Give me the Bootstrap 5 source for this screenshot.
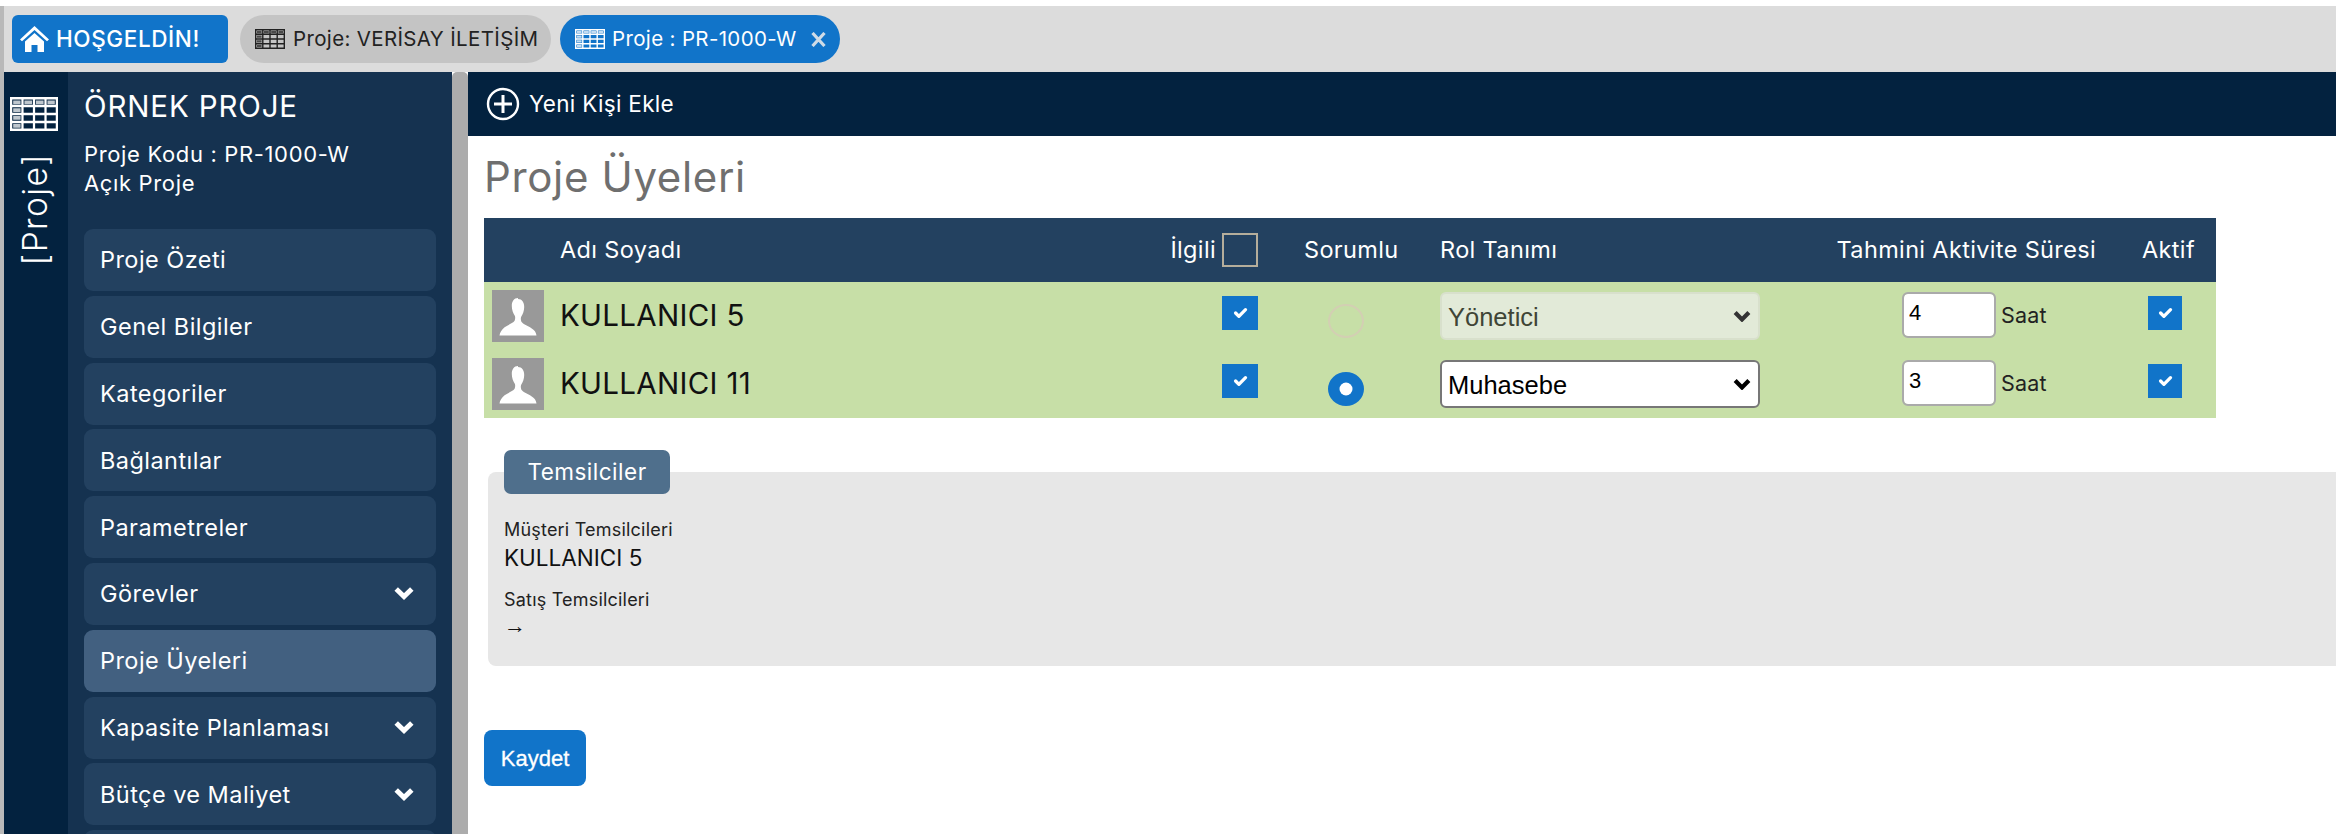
<!DOCTYPE html>
<html lang="tr">
<head>
<meta charset="utf-8">
<title>Proje Üyeleri</title>
<link rel="stylesheet" href="https://cdn.jsdelivr.net/npm/bootstrap@5.3.0/dist/css/bootstrap.min.css">
<style>
html,body{height:834px;overflow:hidden;background:#fff;}
body{font-family:Inter,"Noto Sans",sans-serif;padding-top:6px;color:#111;}
.shell{height:828px;border-left:4px solid #b9b9b9;display:flex;flex-direction:column;}
.topstrip{height:66px;background:#dcdcdc;padding:10px 8px;gap:12px;flex:none;}
.tab-home{width:216px;height:48px;background:#1174c9;color:#fff;border-radius:6px;font-size:22.5px;font-weight:500;padding-left:8px;gap:7px;letter-spacing:.6px;}
.tab-pill{height:48px;border-radius:24px;font-size:20.5px;gap:8px;padding-left:15px;letter-spacing:.35px;}
.tab-a{width:311px;background:#c4c4c4;color:#222;}
.tab-b{width:280px;background:#1174c9;color:#fff;margin-left:-3px;gap:7px;}
.tab-x{margin-left:7px;}
.workarea{flex:1;min-height:0;}
.iconcol{width:64px;background:#03223f;color:#fff;flex:none;padding-top:25px;padding-left:6px;}
.vtext{writing-mode:vertical-rl;transform:rotate(180deg);font-size:33.5px;font-weight:300;margin-top:22px;margin-left:5px;line-height:40px;letter-spacing:1.4px;}
.sidemenu{width:384px;background:#153250;color:#fff;padding:16px 16px 0;flex:none;overflow:hidden;}
.proj-name{font-size:29.5px;line-height:36px;margin-bottom:16px;font-weight:400;white-space:nowrap;letter-spacing:.85px;}
.proj-meta{font-size:22px;line-height:29px;margin-bottom:31px;letter-spacing:.65px;}
.menu-row{height:62px;margin-bottom:4.8px;border-radius:9px;background:#234160;padding:0 22px 0 16px;font-size:23.5px;letter-spacing:.45px;}
.menu-row.is-on{background:#426080;}
.dragbar{width:16px;background:#acacac;flex:none;border-radius:5px 5px 0 0;}
.mainpane{flex:1;min-width:0;}
.toolbar-top{height:64px;background:#03223f;color:#fff;padding-left:18px;gap:9px;font-size:22.5px;letter-spacing:.3px;}
.page-title{font-size:42px;font-weight:400;color:#6f6f6f;margin:0;padding:15px 0 0 16px;height:82px;line-height:52px;letter-spacing:.65px;}
.member-wrap{width:1732px;margin-left:16px;}
table.member-table{table-layout:fixed;margin:0;width:1732px;--bs-table-bg:transparent;border-collapse:collapse;}
.member-table th,.member-table td{padding:0;border:0;vertical-align:top;white-space:nowrap;}
.member-table thead tr{background:#234160;color:#fff;height:64px;}
.member-table th{font-weight:400;font-size:23.5px;vertical-align:middle;letter-spacing:.35px;}
.member-table tbody tr{background:#c7dfa7;height:68px;}
.member-table td{color:#111;}
.avatar-pic{display:block;width:52px;height:52px;margin:8px 0 0 8px;}
.person-name{font-size:29.5px;line-height:67px;font-weight:400;letter-spacing:.3px;}
.boxy.form-check-input{width:36px;height:34px;margin:0;border-radius:0;border:0;background-color:#1174c9;background-size:22px;opacity:1;float:none;}
.boxy-empty.form-check-input{width:36px;height:34px;margin:0 0 0 6px;border-radius:0;border:2px solid #b5ad9b;background-color:transparent;float:none;vertical-align:middle;flex:none;}
.rounder.form-check-input{width:36px;height:34px;margin:0;border:2px solid #d3cfb3;background-color:transparent;float:none;opacity:1;}
.rounder.form-check-input:checked{border-color:#1174c9;background-color:#1174c9;background-size:26px;}
.role-pick.form-select{width:320px;height:48px;font-family:"Liberation Sans",sans-serif;font-size:25.5px;padding:2px 6px 0;border:2px solid #777;border-radius:6px;color:#000;background-color:#fff;
background-image:url("data:image/svg+xml,%3csvg xmlns='http://www.w3.org/2000/svg' viewBox='0 0 20 14'%3e%3cpath fill='none' stroke='%23000' stroke-width='5' d='M2 3l8 8 8-8'/%3e%3c/svg%3e");background-position:right 7px center;background-size:18px 12px;}
.role-pick.form-select:disabled{background-color:#e2ead8;border-color:#d8e0cc;color:#3f4536;opacity:1;
background-image:url("data:image/svg+xml,%3csvg xmlns='http://www.w3.org/2000/svg' viewBox='0 0 20 14'%3e%3cpath fill='none' stroke='%23333' stroke-width='5' d='M2 3l8 8 8-8'/%3e%3c/svg%3e");}
.hours-in.form-control{width:94px;height:46px;font-family:"Liberation Sans",sans-serif;font-size:22px;padding:0 5px 4px;border:2px solid #aaa;border-radius:6px;color:#000;}
.hours-lbl{font-size:21.5px;color:#222;margin-left:5px;letter-spacing:.2px;}
.rep-panel{display:flow-root;margin:54px 0 0 20px;background:#e7e7e7;border-radius:8px 0 0 8px;height:194px;padding:0 16px;}
.rep-legend{width:166px;height:44px;background:#4f6f8c;color:#fff;border-radius:7px;font-size:22.5px;margin:-22px 0 0;letter-spacing:.5px;}
.rep-label{font-size:18px;line-height:24px;color:#222;letter-spacing:.2px;}
.rep-value{font-size:22.500px;line-height:32px;color:#111;}
.rep-arrow{font-family:"Liberation Sans",sans-serif;font-size:22px;line-height:28px;color:#111;}
.btn.save-btn{width:102px;height:56px;background:#1174c9;border:0;border-radius:8px;color:#fff;font-family:"Liberation Sans",sans-serif;font-size:22px;padding:0;margin:64px 0 0 16px;-webkit-text-stroke:.3px #fff;}
</style>
</head>
<body>
<svg width="0" height="0" class="d-block" aria-hidden="true">
  <defs>
    <symbol id="grid-ic" viewBox="0 0 30 20">
      <path fill="none" stroke="currentColor" stroke-width="1.4" d="M.7.7h28.6v18.6H.7zM.7 5.3h28.6M.7 10h28.6M.7 14.7h28.6M7.8.7v18.6M15 .7v18.6M22.2.7v18.6"/>
      <path fill="currentColor" opacity=".75" d="M2 2h4.600v2.200H2zM9 2h4.800v2.200H9zM16.200 2h4.800v2.200h-4.800zM23.400 2h4.600v2.200h-4.600zM2 6.600h4.600v2.200H2zM2 11.200h4.600v2.200H2zM2 15.900h4.600v2.200H2z"/>
    </symbol>
    <symbol id="chev-ic" viewBox="0 0 20 13">
      <path fill="none" stroke="#fff" stroke-width="5" d="M2.200 2l7.800 7.500L17.800 2"/>
    </symbol>
    <symbol id="user-ic" viewBox="0 0 52 52">
      <rect width="52" height="52" fill="#999"/>
      <path fill="#fff" d="M26 8c-4 0-6.200 3.400-6.200 8 0 4 1.400 7.300 3 9.800.6 1 .5 3.700-.2 5-1.500 2.300-6.600 4-10 6.500C9.500 40 8 42.500 7.500 45.500h37c-.5-3-2-5.500-5.100-7.200-3.400-2.500-8.500-4.200-10-6.500-.7-1.300-.8-4-.2-5 1.600-2.500 3-5.800 3-9.800 0-4.600-2.200-8-6.200-8z"/>
    </symbol>
  </defs>
</svg>
<div class="shell">
  <div class="topstrip d-flex align-items-center">
    <div class="tab-home d-flex align-items-center">
      <svg width="29" height="26" viewBox="0 0 29 26"><path fill="#fff" d="M14.500 0L0 13.500l2 1.800L14.500 4 27 15.300l2-1.800zM5 15.500V26h6.500v-7h6v7H24V15.500L14.500 7z"/></svg>
      <span>HOŞGELDİN!</span>
    </div>
    <div class="tab-pill tab-a d-flex align-items-center">
      <svg width="30" height="20"><use href="#grid-ic"/></svg><span>Proje: VERİSAY İLETİŞİM</span>
    </div>
    <div class="tab-pill tab-b d-flex align-items-center">
      <svg width="30" height="20"><use href="#grid-ic"/></svg><span>Proje : PR-1000-W</span>
      <svg class="tab-x" width="15" height="15" viewBox="0 0 15 15" aria-label="Kapat"><path stroke="#cfdbe6" stroke-width="3.200" d="M1.500 1l12 13M13.500 1l-12 13"/></svg>
    </div>
  </div>
  <div class="workarea d-flex">
    <div class="iconcol d-flex flex-column">
      <svg width="48" height="34" viewBox="0 0 30 20" preserveAspectRatio="none"><use href="#grid-ic"/></svg>
      <div class="vtext">[Proje]</div>
    </div>
    <nav class="sidemenu">
      <div class="proj-name">ÖRNEK PROJE</div>
      <div class="proj-meta">Proje Kodu : PR-1000-W<br>Açık Proje</div>
      <div class="menu-row d-flex align-items-center">Proje Özeti</div>
      <div class="menu-row d-flex align-items-center">Genel Bilgiler</div>
      <div class="menu-row d-flex align-items-center">Kategoriler</div>
      <div class="menu-row d-flex align-items-center">Bağlantılar</div>
      <div class="menu-row d-flex align-items-center">Parametreler</div>
      <div class="menu-row d-flex align-items-center justify-content-between">Görevler<svg width="20" height="13"><use href="#chev-ic"/></svg></div>
      <div class="menu-row is-on d-flex align-items-center">Proje Üyeleri</div>
      <div class="menu-row d-flex align-items-center justify-content-between">Kapasite Planlaması<svg width="20" height="13"><use href="#chev-ic"/></svg></div>
      <div class="menu-row d-flex align-items-center justify-content-between">Bütçe ve Maliyet<svg width="20" height="13"><use href="#chev-ic"/></svg></div>
      <div class="menu-row"></div>
    </nav>
    <div class="dragbar"></div>
    <main class="mainpane">
      <div class="toolbar-top d-flex align-items-center">
        <svg width="34" height="34" viewBox="0 0 34 34"><circle cx="17" cy="17" r="15" fill="none" stroke="#fff" stroke-width="2.400"/><path stroke="#fff" stroke-width="3" d="M17 8v18M8 17h18"/></svg>
        <span>Yeni Kişi Ekle</span>
      </div>
      <h1 class="page-title">Proje Üyeleri</h1>
      <div class="member-wrap">
        <table class="table member-table">
          <colgroup><col style="width:76px"><col style="width:604px"><col style="width:98px"><col style="width:178px"><col style="width:340px"><col style="width:340px"><col style="width:96px"></colgroup>
          <thead>
            <tr>
              <th></th><th>Adı Soyadı</th>
              <th class="pe-1"><span class="d-flex align-items-center justify-content-end">İlgili<input class="form-check-input boxy-empty" type="checkbox" aria-label="İlgili"></span></th>
              <th><span class="d-block" style="margin-left:42px">Sorumlu</span></th><th>Rol Tanımı</th>
              <th class="text-end pe-4">Tahmini Aktivite Süresi</th><th><span class="d-block" style="margin-left:22px">Aktif</span></th>
            </tr>
          </thead>
          <tbody>
            <tr>
              <td><svg class="avatar-pic"><use href="#user-ic"/></svg></td>
              <td class="person-name">KULLANICI 5</td>
              <td class="text-end pe-1"><input class="form-check-input boxy" type="checkbox" checked aria-label="İlgili" style="margin-top:14px"></td>
              <td><input class="form-check-input rounder" type="radio" name="res" disabled aria-label="Sorumlu" style="margin:22px 0 0 66px"></td>
              <td><select class="form-select role-pick" disabled style="margin-top:10px" aria-label="Rol"><option>Yönetici</option></select></td>
              <td><div class="d-flex align-items-center" style="margin:10px 0 0 122px"><input class="form-control hours-in" value="4" aria-label="Saat"><span class="hours-lbl">Saat</span></div></td>
              <td><input class="form-check-input boxy" type="checkbox" checked aria-label="Aktif" style="margin:14px 0 0 28px;width:34px"></td>
            </tr>
            <tr>
              <td><svg class="avatar-pic"><use href="#user-ic"/></svg></td>
              <td class="person-name">KULLANICI 11</td>
              <td class="text-end pe-1"><input class="form-check-input boxy" type="checkbox" checked aria-label="İlgili" style="margin-top:14px"></td>
              <td><input class="form-check-input rounder" type="radio" name="res2" checked aria-label="Sorumlu" style="margin:22px 0 0 66px"></td>
              <td><select class="form-select role-pick" style="margin-top:10px" aria-label="Rol"><option>Muhasebe</option></select></td>
              <td><div class="d-flex align-items-center" style="margin:10px 0 0 122px"><input class="form-control hours-in" value="3" aria-label="Saat"><span class="hours-lbl">Saat</span></div></td>
              <td><input class="form-check-input boxy" type="checkbox" checked aria-label="Aktif" style="margin:14px 0 0 28px;width:34px"></td>
            </tr>
          </tbody>
        </table>
      </div>
      <section class="rep-panel">
        <div class="rep-legend d-flex align-items-center justify-content-center">Temsilciler</div>
        <div class="rep-label" style="margin-top:24px">Müşteri Temsilcileri</div>
        <div class="rep-value">KULLANICI 5</div>
        <div class="rep-label" style="margin-top:14px">Satış Temsilcileri</div>
        <div class="rep-arrow">→</div>
      </section>
      <button type="button" class="btn save-btn">Kaydet</button>
    </main>
  </div>
</div>
<script src="https://cdn.jsdelivr.net/npm/bootstrap@5.3.0/dist/js/bootstrap.bundle.min.js"></script>
</body>
</html>
